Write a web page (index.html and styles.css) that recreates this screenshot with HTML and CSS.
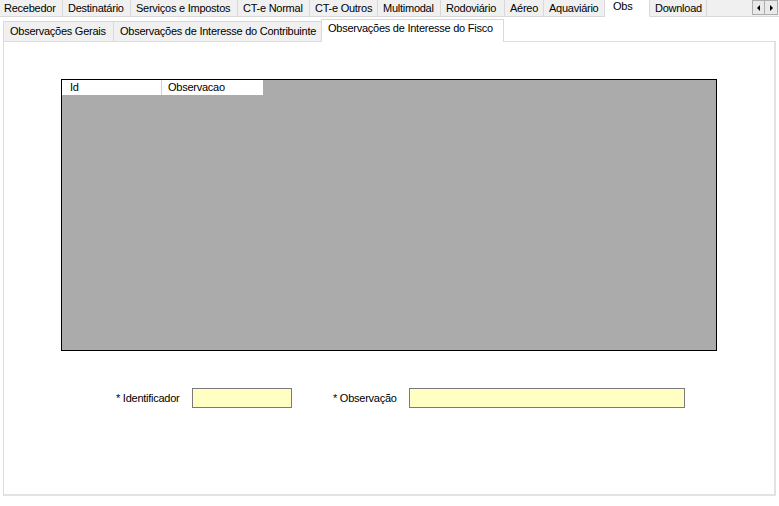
FILE: index.html
```html
<!DOCTYPE html>
<html lang="pt">
<head>
<meta charset="utf-8">
<title>Obs</title>
<link rel="stylesheet" href="styles.css">
</head>
<body>
<div class="app">
  <div class="tabstrip">
    <div class="tab w1">Recebedor</div>
    <div class="tab w2">Destinatário</div>
    <div class="tab w3">Serviços e Impostos</div>
    <div class="tab w4">CT-e Normal</div>
    <div class="tab w5">CT-e Outros</div>
    <div class="tab w6">Multimodal</div>
    <div class="tab w7">Rodoviário</div>
    <div class="tab w8">Aéreo</div>
    <div class="tab w9">Aquaviário</div>
    <div class="tab active w10">Obs</div>
    <div class="tab w11">Download</div>
    <div class="tabfill"></div>
    <div class="scroll">
      <div class="sbtn"><span class="arr left"></span></div>
      <div class="sbtn"><span class="arr right"></span></div>
    </div>
  </div>
  <div class="subarea">
    <div class="subtabs">
      <div class="stab s1">Observações Gerais</div>
      <div class="stab s2">Observações de Interesse do Contribuinte</div>
      <div class="stab active s3">Observações de Interesse do Fisco</div>
    </div>
    <div class="panel">
      <div class="grid">
        <div class="ghead">
          <div class="gcol">Id</div>
          <div class="gcol">Observacao</div>
        </div>
      </div>
      <div class="form">
        <label class="lbl l1">* Identificador</label>
        <div class="input i1"></div>
        <label class="lbl l2">* Observação</label>
        <div class="input i2"></div>
      </div>
    </div>
  </div>
</div>
</body>
</html>
```
FILE: styles.css
```css
* { box-sizing: border-box; }
html, body { margin: 0; padding: 0; background: #fff; }
body {
  font-family: "Liberation Sans", Arial, sans-serif;
  font-size: 11px;
  letter-spacing: -0.25px;
  color: #000;
  width: 779px;
  height: 506px;
  overflow: hidden;
}
.tabstrip {
  display: flex;
  height: 17px;
  align-items: flex-start;
}
.tab {
  height: 17px;
  background: #f0f0f0;
  border-right: 1px solid #d9d9d9;
  border-bottom: 1px solid #d9d9d9;
  padding: 2px 0 0 5px;
  line-height: 13px;
  white-space: nowrap;
}
.tab.active {
  background: #fff;
  border-bottom-color: #fff;
  padding-top: 0;
  padding-left: 8px;
}
.w1 { width: 63px; padding-left: 4px; }
.w2 { width: 68px; }
.w3 { width: 107px; }
.w4 { width: 72px; }
.w5 { width: 68px; }
.w6 { width: 63px; }
.w7 { width: 64px; }
.w8 { width: 39px; }
.w9 { width: 61px; }
.w10 { width: 45px; }
.w11 { width: 57px; padding-left: 5px; }
.tabfill {
  flex: 1;
  height: 17px;
  background: #f0f0f0;
  border-bottom: 1px solid #d9d9d9;
}
.scroll {
  display: flex;
  height: 17px;
  background: #f0f0f0;
  border-bottom: 1px solid #d9d9d9;
  padding: 0 1px 1px 0;
}
.sbtn {
  width: 13px;
  height: 15px;
  border: 1px solid #adadad;
  background: #e9e9e9;
  display: flex;
  align-items: center;
  justify-content: center;
}
.sbtn + .sbtn { border-left: none; }
.arr {
  width: 0; height: 0;
  border-top: 3px solid transparent;
  border-bottom: 3px solid transparent;
}
.arr.left { border-right: 3px solid #000; }
.arr.right { border-left: 3px solid #000; }

.subarea {
  padding: 2px 3px 0 3px;
  width: 779px;
}
.subtabs {
  display: flex;
  align-items: flex-end;
  height: 22px;
  position: relative;
  z-index: 1;
}
.stab {
  height: 20px;
  background: #f0f0f0;
  border: 1px solid #d9d9d9;
  border-bottom: none;
  border-right: none;
  padding: 3px 0 0 6px;
  line-height: 13px;
  white-space: nowrap;
}
.stab.active {
  height: 23px;
  background: #fff;
  border-right: 1px solid #d9d9d9;
  padding-top: 2px;
  margin-bottom: -1px;
}
.s1 { width: 110px; }
.s2 { width: 208px; }
.s3 { width: 183px; }
.panel {
  width: 773px;
  height: 455px;
  border-style: solid;
  border-width: 1px 2px 2px 1px;
  border-color: #dcdcdc #e3e3e3 #e3e3e3 #dcdcdc;
  background: #fff;
  padding: 37px 0 0 57px;
}
.grid {
  width: 656px;
  height: 272px;
  background: #ababab;
  border: 1px solid #000;
}
.ghead {
  display: flex;
  height: 15px;
  background: #fff;
  width: 201px;
}
.gcol {
  width: 100px;
  border-right: 1px solid #d0d0d0;
  padding: 1px 0 0 8px;
  line-height: 13px;
}
.gcol + .gcol { width: 101px; padding-left: 6px; border-right: none; }
.form {
  display: flex;
  align-items: center;
  margin-top: 37px;
  padding-left: 55px;
  height: 20px;
}
.lbl {
  white-space: nowrap;
}
.l1 { width: 76px; }
.l2 { width: 76px; }
.input {
  height: 20px;
  background: #ffffc4;
  border: 1px solid #7a7a7a;
}
.i1 { width: 100px; margin-right: 41px; }
.i2 { width: 276px; }
```
